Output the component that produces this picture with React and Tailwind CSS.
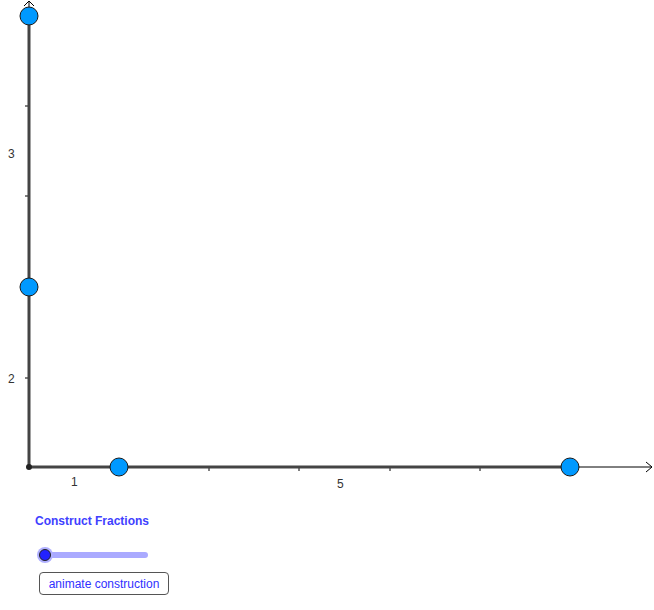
export default function App() {
  const pts = [
    [29, 16],
    [29, 287],
    [119, 467],
    [570, 467],
  ];
  return (
    <div className="w-[654px] h-[610px] bg-white overflow-hidden" style={{ fontFamily: '"Liberation Sans", Arial, sans-serif' }}>
      {/* graphics view */}
      <svg width="654" height="508" className="block">
        {/* thin axes */}
        <line x1="29" y1="467" x2="652" y2="467" stroke="#000" strokeWidth="1" />
        <line x1="29" y1="467" x2="29" y2="1" stroke="#000" strokeWidth="1" />
        <polyline points="646,462 652,467 646,472" fill="none" stroke="#000" strokeWidth="1" />
        <polyline points="24,6 29,1 34,6" fill="none" stroke="#000" strokeWidth="1" />
        {/* ticks */}
        {[209, 299, 390, 480].map((x) => (
          <line key={x} x1={x} y1="466" x2={x} y2="471" stroke="#000" strokeWidth="1" />
        ))}
        {[106, 196, 378].map((y) => (
          <line key={y} x1="25" y1={y} x2="30" y2={y} stroke="#000" strokeWidth="1" />
        ))}
        {/* segments */}
        <line x1="29" y1="467" x2="570" y2="467" stroke="#444" strokeWidth="3" />
        <line x1="29" y1="467" x2="29" y2="16" stroke="#444" strokeWidth="3" />
        {/* labels */}
        <g fill="#333" fontSize="12" fontFamily='"Liberation Sans", Arial, sans-serif'>
          <text x="71" y="486">1</text>
          <text x="337" y="488">5</text>
          <text x="8" y="158">3</text>
          <text x="8" y="383">2</text>
        </g>
        <circle cx="29" cy="467" r="3" fill="#222" />
        {pts.map(([x, y]) => (
          <circle key={`${x}-${y}`} cx={x} cy={y} r="9" fill="#0099ff" stroke="#1a1a1a" strokeWidth="1" />
        ))}
      </svg>

      {/* controls */}
      <div className="pl-[35px] mt-[6px]">
        <div className="text-[12px] leading-[14px] font-bold text-[#4040ff]">Construct Fractions</div>
      </div>
      <div className="pl-[35px] mt-[19px]">
        <svg width="120" height="16" className="block">
          <line x1="10" y1="8" x2="110" y2="8" stroke="#aaaaff" strokeWidth="6" strokeLinecap="round" />
          <circle cx="10" cy="8" r="8" fill="#b0b0ff" />
          <circle cx="10" cy="8" r="5.5" fill="#2222ff" stroke="#222" strokeWidth="1" />
        </svg>
      </div>
      <div className="pl-[39px] mt-[9px]">
        <button className="w-[130px] h-[23px] border border-[#555] rounded-[4px] bg-white text-[12px] text-[#3030ff] flex items-center justify-center">
          animate construction
        </button>
      </div>
    </div>
  );
}
